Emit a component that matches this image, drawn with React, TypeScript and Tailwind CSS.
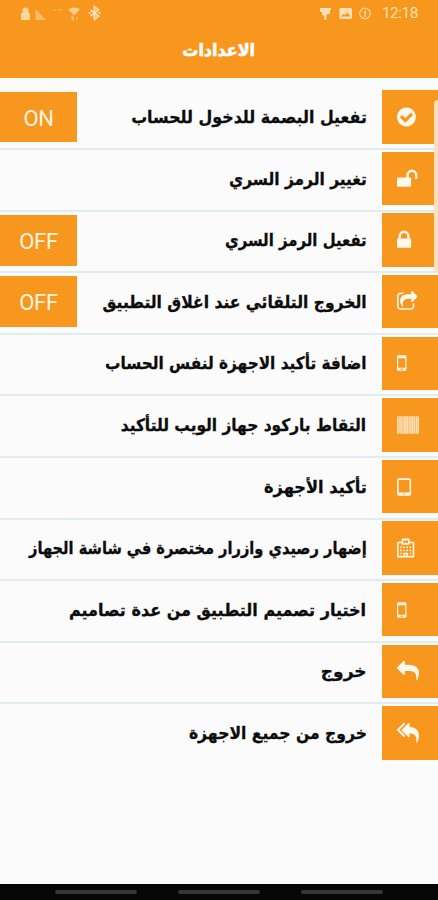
import type { ReactNode } from "react";

// ── Icons ─────────────────────────────────────────────────────────────────────

function Glyph({ x = 0, w = 1792, children }: { x?: number; w?: number; children: ReactNode }) {
  return (
    <svg
      viewBox={`${x} 0 ${w} 1792`}
      className="h-[22px] w-auto overflow-visible"
      fill="currentColor"
      fillRule="evenodd"
      aria-hidden="true"
    >
      {children}
    </svg>
  );
}

const ICONS: Record<string, ReactNode> = {
  check: (
    <Glyph x={128} w={1536}>
      <path d="M1412 734q0-28-18-46l-91-90q-19-19-45-19t-45 19l-408 407-226-226q-19-19-45-19t-45 19l-91 90q-18 18-18 46 0 27 18 45l362 362q19 19 45 19 27 0 46-19l543-543q18-18 18-45zm252 162q0 209-103 385.500t-279.500 279.500-385.500 103-385.500-103-279.500-279.500-103-385.500 103-385.500 279.500-279.500 385.500-103 385.500 103 279.500 279.500 103 385.500z" />
    </Glyph>
  ),
  unlock: (
    <Glyph x={64} w={1664}>
      <path d="M1728 576v256q0 26-19 45t-45 19h-64q-26 0-45-19t-19-45v-256q0-106-75-181t-181-75-181 75-75 181v192h96q40 0 68 28t28 68v576q0 40-28 68t-68 28h-960q-40 0-68-28t-28-68v-576q0-40 28-68t68-28h672v-192q0-185 131.500-316.500t316.500-131.500 316.500 131.500 131.500 316.500z" />
    </Glyph>
  ),
  lock: (
    <Glyph x={320} w={1152}>
      <path d="M640 768h512v-192q0-106-75-181t-181-75-181 75-75 181v192zm832 96v576q0 40-28 68t-68 28h-960q-40 0-68-28t-28-68v-576q0-40 28-68t68-28h32v-192q0-184 132-316t316-132 316 132 132 316v192h32q40 0 68 28t28 68z" />
    </Glyph>
  ),
  share: (
    <Glyph x={64} w={1664}>
      <path d="M1472 989v259q0 119-84.500 203.500t-203.500 84.500h-832q-119 0-203.500-84.500t-84.500-203.500v-832q0-119 84.500-203.500t203.500-84.500h255q13 0 22.500 9.500t9.500 22.500q0 27-26 32-77 26-133 60-10 4-16 4h-112q-66 0-113 47t-47 113v832q0 66 47 113t113 47h832q66 0 113-47t47-113v-214q0-19 18-29 28-13 54-37 16-16 35-8 21 9 21 29zm237-496l-384 384q-18 19-45 19-12 0-25-5-39-17-39-59v-192h-160q-323 0-438 131-119 137-74 473 3 23-20 34-8 2-12 2-16 0-26-13-10-14-21-31t-39.500-68.500-49.500-99.500-38.500-114-17.500-122q0-49 3.500-91t14-90 28-88 47-81.500 68.500-74 94.500-61.500 124.500-48.500 159.500-30.500 196.500-11h160v-192q0-42 39-59 13-5 25-5 26 0 45 19l384 384q19 19 19 45t-19 45z" />
    </Glyph>
  ),
  mobile: (
    <Glyph x={512} w={768}>
      <path d="M976 1408q0-33-23.500-56.500t-56.500-23.500-56.500 23.500-23.500 56.500 23.500 56.500 56.500 23.500 56.500-23.500 23.500-56.500zm208-160v-704q0-13-9.500-22.500t-22.500-9.500h-512q-13 0-22.500 9.500t-9.500 22.500v704q0 13 9.500 22.500t22.500 9.500h512q13 0 22.500-9.500t9.500-22.500zm-192-848q0-16-16-16h-160q-16 0-16 16t16 16h160q16 0 16-16zm288-16v1024q0 52-38 90t-90 38h-512q-52 0-90-38t-38-90v-1024q0-52 38-90t90-38h512q52 0 90 38t38 90z" />
    </Glyph>
  ),
  barcode: (
    <Glyph>
      <path d="M0 192h1792v1408H0z" opacity=".35" />
      <path
        opacity=".6"
        d="M0 192h110v1408H0zM160 192h50v1408h-50zM270 192h110v1408H270zM450 192h50v1408h-50zM550 192h160v1408H550zM760 192h160v1408H760zM1000 192h110v1408h-110zM1170 192h140v1408h-140zM1350 192h110v1408h-110zM1530 192h90v1408h-90zM1670 192h122v1408h-122z"
      />
    </Glyph>
  ),
  tablet: (
    <Glyph x={320} w={1152}>
      <path d="M480 192h832q66 0 113 47t47 113v1088q0 66-47 113t-113 47H480q-66 0-113-47t-47-113V352q0-66 47-113t113-47zm0 128q-32 0-32 32v960q0 32 32 32h832q32 0 32-32V352q0-32-32-32zm416 1088a64 64 0 100 128 64 64 0 000-128z" />
    </Glyph>
  ),
  hospital: (
    <Glyph x={192} w={1408}>
      <path d="M256 384h320V192q0-64 64-64h512q64 0 64 64v192h320q64 0 64 64v1152q0 64-64 64H256q-64 0-64-64V448q0-64 64-64zM320 512v1024h384v-256h384v256h384V512h-256v64q0 64-64 64H640q-64 0-64-64v-64zM832 1408v128h128v-128zM704 256v256h128V448h128v64h128V256H960v64H832v-64z" />
      <path d="M448 768h128v128H448zM704 768h128v128H704zM960 768h128v128H960zM1216 768h128v128h-128zM448 1024h128v128H448zM704 1024h128v128H704zM960 1024h128v128H960zM1216 1024h128v128h-128zM448 1280h128v128H448zM1216 1280h128v128h-128z" />
    </Glyph>
  ),
  reply: (
    <Glyph>
      <path d="M1792 1120q0 166-127 451-3 7-10.500 24t-13.500 30-13 22q-12 17-28 17-15 0-23.500-10t-8.500-25q0-9 2.500-26.500t2.500-23.500q5-68 5-123 0-101-17.500-181t-48.500-138.500-80-101-105.500-69.500-133-42.500-154-21.500-175.500-6h-224v256q0 26-19 45t-45 19-45-19l-512-512q-19-19-19-45t19-45l512-512q19-19 45-19t45 19 19 45v256h224q713 0 875 403 53 134 53 333z" />
    </Glyph>
  ),
  replyAll: (
    <Glyph>
      <path d="M640 1082v70q0 42-39 59-13 5-25 5-27 0-45-19l-512-512q-19-19-19-45t19-45l512-512q29-31 70-14 39 17 39 59v69l-397 398q-19 19-19 45t19 45zm1152 58q0 58-17 133.500t-38.500 138-48 125-40.500 90.500l-20 40q-8 17-28 17-6 0-9-1-25-8-23-34 43-400-106-565-64-71-170.500-110.500t-267.500-52.500v251q0 42-39 59-13 5-25 5-27 0-45-19l-512-512q-19-19-19-45t19-45l512-512q29-31 70-14 39 17 39 59v262q411 28 599 221 169 173 169 509z" />
    </Glyph>
  ),
};

// ── Data ──────────────────────────────────────────────────────────────────────

type Row = { icon: string; label: string; fit: string; toggle?: "ON" | "OFF" };

// fit: horizontal condensing of the label, per row
const ROWS: Row[] = [
  { icon: "check", label: "تفعيل البصمة للدخول للحساب", fit: "scale-x-[0.932]", toggle: "ON" },
  { icon: "unlock", label: "تغيير الرمز السري", fit: "scale-x-[0.907]" },
  { icon: "lock", label: "تفعيل الرمز السري", fit: "scale-x-[0.876]", toggle: "OFF" },
  { icon: "share", label: "الخروج التلقائي عند اغلاق التطبيق", fit: "scale-x-[0.915]", toggle: "OFF" },
  { icon: "mobile", label: "اضافة تأكيد الاجهزة لنفس الحساب", fit: "scale-x-[0.9]" },
  { icon: "barcode", label: "التقاط باركود جهاز الويب للتأكيد", fit: "scale-x-[0.905]" },
  { icon: "tablet", label: "تأكيد الأجهزة", fit: "scale-x-[0.954]" },
  { icon: "hospital", label: "إضهار رصيدي وازرار مختصرة في شاشة الجهاز", fit: "scale-x-[0.86]" },
  { icon: "mobile", label: "اختيار تصميم التطبيق من عدة تصاميم", fit: "scale-x-[0.943]" },
  { icon: "reply", label: "خروج", fit: "scale-x-100" },
  { icon: "replyAll", label: "خروج من جميع الاجهزة", fit: "scale-x-[0.918]" },
];

// ── Header ────────────────────────────────────────────────────────────────────

function StatusBar() {
  return (
    <div className="flex h-[26px] items-center justify-between pr-[20px] pl-[20px] text-[#fee0b4]">
      <svg width="82" height="16" viewBox="0 0 82 16" fill="currentColor" aria-hidden="true">
        <path d="M1 8h1.500V5.500a3 3 0 016 0V8H10v7H1z" opacity=".85" />
        <path d="M15.500 4v11H26z" opacity=".5" />
        <path d="M33 4h3v1.500h-3zM38 4h4v1.500h-4z" opacity=".35" />
        <path d="M48.500 4.500q6-4 11.500 0l-5.800 6z" opacity=".75" />
        <path d="M51 12.500l1.500-2.500 1.500 2.500v3h-1.500zM57 15l-1.500-2.500 1.500-1 1 3z" opacity=".6" />
        <path d="M70.500 5l8 6-4 3.300V1.700l4 3.300-8 6M68.500 8h2M78.500 8h2" fill="none" stroke="currentColor" strokeWidth="1.800" />
      </svg>
      <div className="flex items-center gap-[10px]">
        <svg width="53" height="15" viewBox="0 0 53 15" fill="currentColor" aria-hidden="true">
          <path d="M1 2h11v2h-1v4H8.500l-1 1v4.500H5V10L3 8.500V6H1z" />
          <path d="M22 2h9.500q1.500 0 1.500 1.500v8q0 1.500-1.500 1.500H22q-1.500 0-1.500-1.500v-8Q20.500 2 22 2zm0 8.500h9.500l-3-4-2.500 2.500-1.500-1z" fillRule="evenodd" />
          <circle cx="46" cy="7.500" r="5.300" fill="none" stroke="currentColor" strokeWidth="1.200" opacity=".85" />
          <path d="M45.300 4.500h1.600v4h-1.600zM45.300 9.300h1.600v1.400h-1.600z" />
        </svg>
        <span className="pt-px font-['Roboto',sans-serif] text-[15.500px] leading-none tracking-[-0.5px]">
          12:18
        </span>
      </div>
    </div>
  );
}

function Header() {
  return (
    <header className="h-[78px] bg-[#f8971d]">
      <StatusBar />
      <h1
        dir="rtl"
        className="mt-[9px] text-center font-['DejaVu_Sans',sans-serif] text-[17px] leading-[30px] font-bold text-white [-webkit-text-stroke:0.6px_white]"
      >
        <span className="inline-block scale-x-[0.94]">الاعدادات</span>
      </h1>
    </header>
  );
}

// ── Settings row ──────────────────────────────────────────────────────────────

function SettingRow({ row }: { row: Row }) {
  return (
    <li className="flex h-[61.600px] items-start border-b-2 border-[#dfedf1] pt-[1.700px] last:border-transparent">
      <div
        dir="ltr"
        className="flex h-[53.500px] w-[56.500px] shrink-0 items-center bg-[#f8971d] pl-[15.500px] text-[#fff8ec]"
      >
        {ICONS[row.icon]}
      </div>
      <div className="flex h-[53.500px] min-w-0 flex-1 items-center pr-[15px]">
        <span
          className={`inline-block origin-right font-['DejaVu_Sans',sans-serif] text-[17px] leading-[30px] font-bold whitespace-nowrap text-[#0c0c0c] [-webkit-text-stroke:0.3px_#0c0c0c] ${row.fit}`}
        >
          {row.label}
        </span>
      </div>
      {row.toggle && (
        <button
          type="button"
          className="mt-[1.500px] flex h-[50.700px] w-[77px] shrink-0 items-center justify-center bg-[#f8971d] pt-[2px] font-['Roboto',sans-serif] text-[22px] tracking-[-0.3px] text-[#fff4e0]"
        >
          {row.toggle}
        </button>
      )}
    </li>
  );
}

// ── Main ──────────────────────────────────────────────────────────────────────

export default function App() {
  return (
    <div className="relative flex h-[900px] w-[438px] flex-col overflow-hidden bg-[#fbfbfb]">
      <Header />
      <main className="flex-1 pt-[10.500px]">
        <ul dir="rtl">
          {ROWS.map((row, i) => (
            <SettingRow key={i} row={row} />
          ))}
        </ul>
      </main>
      <footer className="flex h-4 items-center justify-center gap-[41px] bg-[#060606]">
        <span className="h-1 w-[82px] rounded-full bg-[#363636]" />
        <span className="h-1 w-[82px] rounded-full bg-[#363636]" />
        <span className="h-1 w-[82px] rounded-full bg-[#363636]" />
      </footer>
      {/* edge panel handle */}
      <div className="absolute top-[100px] right-0 h-[172px] w-[4px] rounded-l-sm bg-[#fbe0bd]" />
    </div>
  );
}
